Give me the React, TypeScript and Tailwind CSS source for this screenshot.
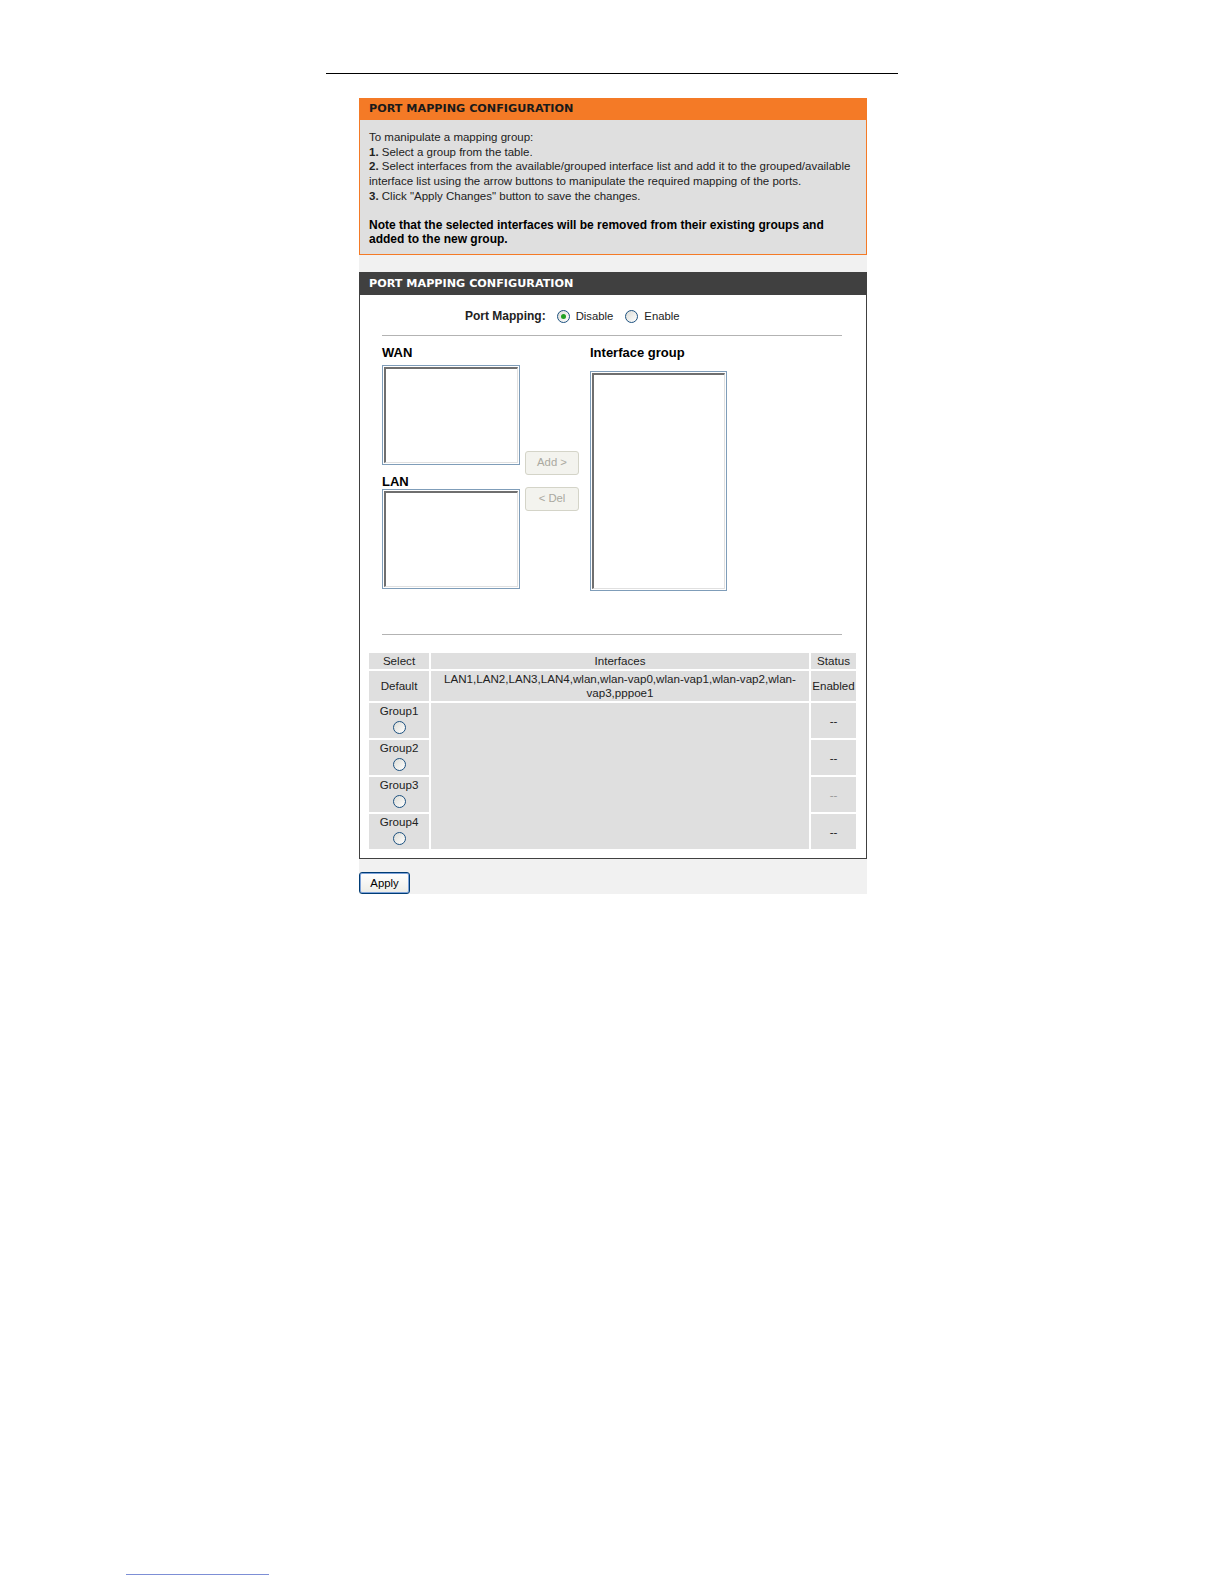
import React from 'react'

const font = { fontFamily: '"Liberation Sans", Arial, sans-serif' }
const capsFont = { fontFamily: '"DejaVu Sans", Verdana, sans-serif' }

const Radio = ({ checked = false }: { checked?: boolean }) => (
    <span className='inline-flex items-center justify-center w-[13px] h-[13px] rounded-full border border-[#1c5180] bg-gradient-to-br from-[#dcdcd6] to-white'>
        {checked && <span className='w-[5px] h-[5px] rounded-full bg-[#21a121]' />}
    </span>
)

const ListBox = ({ className }: { className: string }) => (
    <div className={`border border-[#7f9db9] bg-white p-[1px] ${className}`}>
        <div className='w-full h-full border-t-2 border-l-2 border-[#6f6f6f] border-r border-b border-r-[#e0e0e0] border-b-[#e0e0e0]' />
    </div>
)

const groups = ['Group1', 'Group2', 'Group3', 'Group4']

const App = () => {
    return (
        <div className='relative w-full h-[1584px] overflow-hidden bg-white' style={font}>
            <div className='pt-[73px]'>
                <div className='ml-[326px] w-[572px] h-px bg-black' />
            </div>

            <div className='w-[508px] ml-[359px] mt-[24px] bg-[#f1f1f1]'>
                {/* info panel */}
                <div className='border border-[#f47a26]'>
                    <div className='bg-[#f47a26] h-[21px] px-[9px] flex items-center text-[11.2px] font-bold text-[#1a1a1a]' style={capsFont}>
                        PORT MAPPING CONFIGURATION
                    </div>
                    <div className='bg-[#dfdfdf] px-[9px] pt-[10px] pb-[8px] text-[11.5px] leading-[14.7px] text-[#222]'>
                        <p>To manipulate a mapping group:</p>
                        <p><b>1.</b> Select a group from the table.</p>
                        <p><b>2.</b> Select interfaces from the available/grouped interface list and add it to the grouped/available interface list using the arrow buttons to manipulate the required mapping of the ports.</p>
                        <p><b>3.</b> Click "Apply Changes" button to save the changes.</p>
                        <p className='mt-[14px] font-bold text-[12px] leading-[14.2px] text-black'>Note that the selected interfaces will be removed from their existing groups and added to the new group.</p>
                    </div>
                </div>

                {/* config panel */}
                <div className='mt-[17px] border border-[#404040] bg-white'>
                    <div className='bg-[#404040] h-[22px] px-[9px] flex items-center text-[11.2px] font-bold text-white' style={capsFont}>
                        PORT MAPPING CONFIGURATION
                    </div>
                    <div className='pl-[22px] pr-[24px] pt-[14px]'>
                        <div className='flex items-center h-[15px] text-[11.3px] text-[#222] pl-[83px]'>
                            <span className='font-bold text-[12px] mr-[11px]'>Port Mapping:</span>
                            <Radio checked />
                            <span className='ml-[6px] mr-[12px]'>Disable</span>
                            <Radio />
                            <span className='ml-[6px]'>Enable</span>
                        </div>
                        <div className='mt-[11px] h-px bg-[#b3b3b3]' />

                        <div className='flex mt-[10px] h-[245px]'>
                            <div className='w-[138px]'>
                                <div className='text-[13px] font-bold leading-[14px] text-black'>WAN</div>
                                <ListBox className='mt-[5px] w-[138px] h-[100px]' />
                                <div className='mt-[10px] text-[13px] font-bold leading-[14px] text-black'>LAN</div>
                                <ListBox className='mt-0 w-[138px] h-[100px]' />
                            </div>
                            <div className='w-[70px] pl-[5px] pt-[105px] flex flex-col gap-[12px]'>
                                <button className='w-[54px] h-[24px] rounded-[3px] border border-[#d4d4c8] bg-[#f3f3ee] text-[11.3px] text-[#aaa9a0]'>Add &gt;</button>
                                <button className='w-[54px] h-[24px] rounded-[3px] border border-[#d4d4c8] bg-[#f3f3ee] text-[11.3px] text-[#aaa9a0]'>&lt; Del</button>
                            </div>
                            <div>
                                <div className='text-[13px] font-bold leading-[14px] text-black'>Interface group</div>
                                <ListBox className='mt-[11px] w-[137px] h-[220px]' />
                            </div>
                        </div>

                        <div className='mt-[43px] h-px bg-[#b3b3b3]' />
                    </div>

                    <div className='pl-[7px] pt-[16px] pb-[7px]'>
                        <table className='w-[491px] border-separate border-spacing-[2px] text-[11.6px] text-[#222] text-center'>
                            <tbody>
                                <tr className='h-[16px] leading-[14px]'>
                                    <td className='bg-[#dfdfdf] w-[60px]'>Select</td>
                                    <td className='bg-[#dfdfdf]'>Interfaces</td>
                                    <td className='bg-[#dfdfdf] w-[45px]'>Status</td>
                                </tr>
                                <tr className='h-[30px] leading-[14px]'>
                                    <td className='bg-[#dfdfdf]'>Default</td>
                                    <td className='bg-[#dfdfdf] px-[10px]'>LAN1,LAN2,LAN3,LAN4,wlan,wlan-vap0,wlan-vap1,wlan-vap2,wlan-vap3,pppoe1</td>
                                    <td className='bg-[#dfdfdf]'>Enabled</td>
                                </tr>
                                {groups.map((g, i) => (
                                    <tr key={g} className='h-[35px]'>
                                        <td className='bg-[#dfdfdf] leading-[14px] align-top pt-[1px]'>
                                            <div>{g}</div>
                                            <div className='flex justify-center mt-[3px]'><Radio /></div>
                                        </td>
                                        {i === 0 && <td rowSpan={4} className='bg-[#dfdfdf]' />}
                                        <td className={`bg-[#dfdfdf] ${i === 2 ? 'text-[#999]' : ''}`}>--</td>
                                    </tr>
                                ))}
                            </tbody>
                        </table>
                    </div>
                </div>

                <div className='pt-[11px]'>
                    <button className='w-[51px] h-[22px] rounded-[3px] border border-[#003c74] bg-gradient-to-b from-white to-[#ececE6] text-[11.3px] text-black shadow-[inset_0_0_0_1px_#7ea3d9]'>Apply</button>
                </div>
            </div>

            <div className='absolute left-[126px] top-[1574px] w-[143px] h-px bg-[#7d8fd6]' />
        </div>
    )
}

export default App
